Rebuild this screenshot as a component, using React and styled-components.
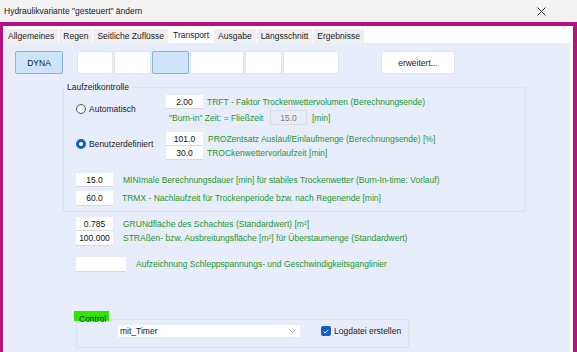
import styled, { createGlobalStyle } from 'styled-components';

const GlobalStyle = createGlobalStyle`
  html, body {
    margin: 0;
    padding: 0;
    height: 100%;
    overflow: hidden;
  }
  body {
    font-family: "Liberation Sans", Arial, sans-serif;
    font-size: 8.5px;
    color: #1b1b1b;
    background: #fff;
  }
  #root {
    height: 100%;
  }
`;

const GREEN = '#24962a';

const Window = styled.div`
  display: flex;
  flex-direction: column;
  width: 577px;
  height: 352px;
  background: #f3f3f3;
`;

const TitleBar = styled.div`
  height: 22px;
  flex-shrink: 0;
  display: flex;
  align-items: center;
  justify-content: space-between;
  padding: 0 31px 0 4px;
  box-sizing: border-box;
  color: #1a1a1a;
`;

const Frame = styled.div`
  flex: 1;
  min-height: 0;
  display: flex;
  flex-direction: column;
  border: solid #b5127f;
  border-width: 4px 4px 0 3px;
  padding: 0 3px 0 1px;
  background: #fff;
`;

const TabStrip = styled.div`
  height: 17px;
  flex-shrink: 0;
  display: flex;
  align-items: flex-end;
  gap: 1px;
`;

const Tab = styled.div`
  height: ${(p) => (p.$active ? 17 : 14)}px;
  box-sizing: border-box;
  padding: ${(p) => (p.$active ? '2px 4px 1px' : '0 4px')};
  line-height: 14px;
  background: ${(p) => (p.$active ? '#fff' : '#efefef')};
  color: #1a1a1a;
  white-space: nowrap;
`;

const Panel = styled.div`
  flex: 1;
  display: flex;
  flex-direction: column;
  align-items: flex-start;
  padding-top: 8px;
  background: #e8edfc;
`;

const ButtonRow = styled.div`
  display: flex;
  margin-left: 11px;
`;

const ToolButton = styled.div`
  width: ${(p) => p.$w}px;
  height: 23px;
  box-sizing: border-box;
  margin-left: ${(p) => p.$gap ?? 1}px;
  border: 1px solid ${(p) => (p.$active ? '#86b3e2' : '#e2e5ec')};
  border-radius: 2px;
  background: ${(p) => (p.$active ? '#cde3f8' : '#fff')};
  display: flex;
  align-items: center;
  justify-content: center;
  color: #1a1a1a;
`;

const Group = styled.fieldset`
  margin: 7px 0 0 59px;
  width: 463px;
  box-sizing: border-box;
  padding: 0;
  border: 1px solid #dde2ef;
  min-inline-size: 0;
`;

const Legend = styled.legend`
  padding: 0 3px;
  margin: 0;
  line-height: 12px;
  color: #1a1a1a;
`;

const GroupBody = styled.div`
  padding: 2px 0 6px 12px;
`;

const OptionBlock = styled.div`
  display: grid;
  grid-template-columns: 90px auto;
  row-gap: ${(p) => p.$gap}px;
  margin-top: ${(p) => p.$top || 0}px;
  justify-content: start;
`;

const RadioOption = styled.label`
  grid-row: span 2;
  align-self: center;
  display: flex;
  align-items: center;
  gap: 3px;
  margin-top: -3px;
`;

const Radio = styled.span`
  width: 10px;
  height: 10px;
  box-sizing: border-box;
  border-radius: 50%;
  border: ${(p) => (p.$checked ? '3px solid #0f5fc6' : '1px solid #555')};
  background: ${(p) => (p.$checked ? '#fff' : '#f5f5f5')};
`;

const Line = styled.div`
  display: flex;
  align-items: center;
  margin-top: ${(p) => p.$top || 0}px;
  margin-left: ${(p) => p.$left || 0}px;
`;

const Field = styled.div`
  width: ${(p) => p.$w || 37}px;
  height: ${(p) => p.$h || 13}px;
  flex-shrink: 0;
  background: #fff;
  box-shadow: 0 1px 0 #d4d8e2;
  display: flex;
  align-items: center;
  justify-content: center;
  color: #111;
`;

const DisabledField = styled(Field)`
  box-sizing: border-box;
  background: #eaedf6;
  border: 1px solid #d6dbe6;
  box-shadow: none;
  color: #7a7a7a;
`;

const Hint = styled.span`
  color: ${GREEN};
  white-space: nowrap;
  margin-left: ${(p) => p.$gap ?? 4}px;
  width: ${(p) => (p.$w ? `${p.$w}px` : 'auto')};
  flex-shrink: 0;
`;

const ControlFrame = styled.div`
  position: relative;
  margin: 48px 0 0 72px;
  width: 333px;
  box-sizing: border-box;
  border: 1px solid #dde2ef;
  padding: 5px 0 10px 41px;
  display: flex;
  align-items: center;
`;

const ControlTag = styled.span`
  position: absolute;
  top: -9px;
  left: -3px;
  width: 35px;
  height: 10px;
  box-sizing: border-box;
  padding-left: 5px;
  background: #2ee600;
  line-height: 16px;
  color: #1a1a1a;
`;

const Select = styled.div`
  width: 182px;
  height: 12px;
  box-sizing: border-box;
  padding: 0 4px 0 2px;
  background: #fff;
  display: flex;
  align-items: center;
  justify-content: space-between;
  color: #111;
`;

const CheckOption = styled.label`
  display: flex;
  align-items: center;
  gap: 3px;
  margin-left: 21px;
  color: #1a1a1a;
`;

const CheckBox = styled.span`
  width: 10px;
  height: 10px;
  border-radius: 2px;
  background: #0f5fc6;
  display: flex;
  align-items: center;
  justify-content: center;
`;

const tabs = ['Allgemeines', 'Regen', 'Seitliche Zuflüsse', 'Transport', 'Ausgabe', 'Längsschnitt', 'Ergebnisse'];
const slots = [
  { w: 36, gap: 14 },
  { w: 37 },
  { w: 37, active: true },
  { w: 54 },
  { w: 37 },
  { w: 56 },
];

export default function App() {
  return (
    <>
      <GlobalStyle />
      <Window>
        <TitleBar>
          <span>Hydraulikvariante "gesteuert" ändern</span>
          <svg width="9" height="9" viewBox="0 0 9 9">
            <path d="M0.5 0.5 L8.5 8.5 M8.5 0.5 L0.5 8.5" stroke="#333" strokeWidth="1" />
          </svg>
        </TitleBar>
        <Frame>
          <TabStrip>
            {tabs.map((t) => (
              <Tab key={t} $active={t === 'Transport'}>
                {t}
              </Tab>
            ))}
          </TabStrip>
          <Panel>
            <ButtonRow>
              <ToolButton $w={48} $gap={0} $active>
                DYNA
              </ToolButton>
              {slots.map((s, i) => (
                <ToolButton key={i} $w={s.w} $gap={s.gap} $active={s.active} />
              ))}
              <ToolButton $w={74} $gap={42}>
                erweitert...
              </ToolButton>
            </ButtonRow>

            <Group>
              <Legend>Laufzeitkontrolle</Legend>
              <GroupBody>
                <OptionBlock $gap={2}>
                  <RadioOption>
                    <Radio />
                    Automatisch
                  </RadioOption>
                  <Line>
                    <Field>2.00</Field>
                    <Hint>TRFT - Faktor Trockenwettervolumen (Berechnungsende)</Hint>
                  </Line>
                  <Line>
                    <Hint $gap={3} $w={101}>
                      "Burn-in" Zeit: = Fließzeit
                    </Hint>
                    <DisabledField $h={15}>15.0</DisabledField>
                    <Hint $gap={5}>[min]</Hint>
                  </Line>
                </OptionBlock>
                <OptionBlock $gap={1} $top={7}>
                  <RadioOption>
                    <Radio $checked />
                    Benutzerdefiniert
                  </RadioOption>
                  <Line>
                    <Field>101.0</Field>
                    <Hint $gap={5}>PROZentsatz Auslauf/Einlaufmenge (Berechnungsende) [%]</Hint>
                  </Line>
                  <Line>
                    <Field>30.0</Field>
                    <Hint>TROCkenwettervorlaufzeit [min]</Hint>
                  </Line>
                </OptionBlock>
                <Line $top={14}>
                  <Field>15.0</Field>
                  <Hint $gap={10}>
                    MINImale Berechnungsdauer [min] für stabiles Trockenwetter (Burn-In-time: Vorlauf)
                  </Hint>
                </Line>
                <Line $top={5}>
                  <Field $h={14}>60.0</Field>
                  <Hint $gap={9}>TRMX - Nachlaufzeit für Trockenperiode bzw. nach Regenende [min]</Hint>
                </Line>
              </GroupBody>
            </Group>

            <Line $top={5} $left={72}>
              <Field>0.785</Field>
              <Hint $gap={10}>GRUNdfläche des Schachtes (Standardwert) [m²]</Hint>
            </Line>
            <Line $top={1} $left={72}>
              <Field $h={14}>100.000</Field>
              <Hint $gap={10}>STRAßen- bzw. Ausbreitungsfläche [m²] für Überstaumenge (Standardwert)</Hint>
            </Line>
            <Line $top={12} $left={72}>
              <Field $w={50} $h={14} />
              <Hint $gap={10}>Aufzeichnung Schleppspannungs- und Geschwindigkeitsganglinier</Hint>
            </Line>

            <ControlFrame>
              <ControlTag>Control</ControlTag>
              <Select>
                <span>mit_Timer</span>
                <svg width="7" height="4" viewBox="0 0 7 4">
                  <path d="M0.5 0.5 L3.5 3.5 L6.5 0.5" fill="none" stroke="#888" strokeWidth="0.8" />
                </svg>
              </Select>
              <CheckOption>
                <CheckBox>
                  <svg width="6" height="5" viewBox="0 0 6 5">
                    <path d="M0.6 2.6 L2.2 4 L5.4 0.8" fill="none" stroke="#fff" strokeWidth="1" />
                  </svg>
                </CheckBox>
                Logdatei erstellen
              </CheckOption>
            </ControlFrame>
          </Panel>
        </Frame>
      </Window>
    </>
  );
}
